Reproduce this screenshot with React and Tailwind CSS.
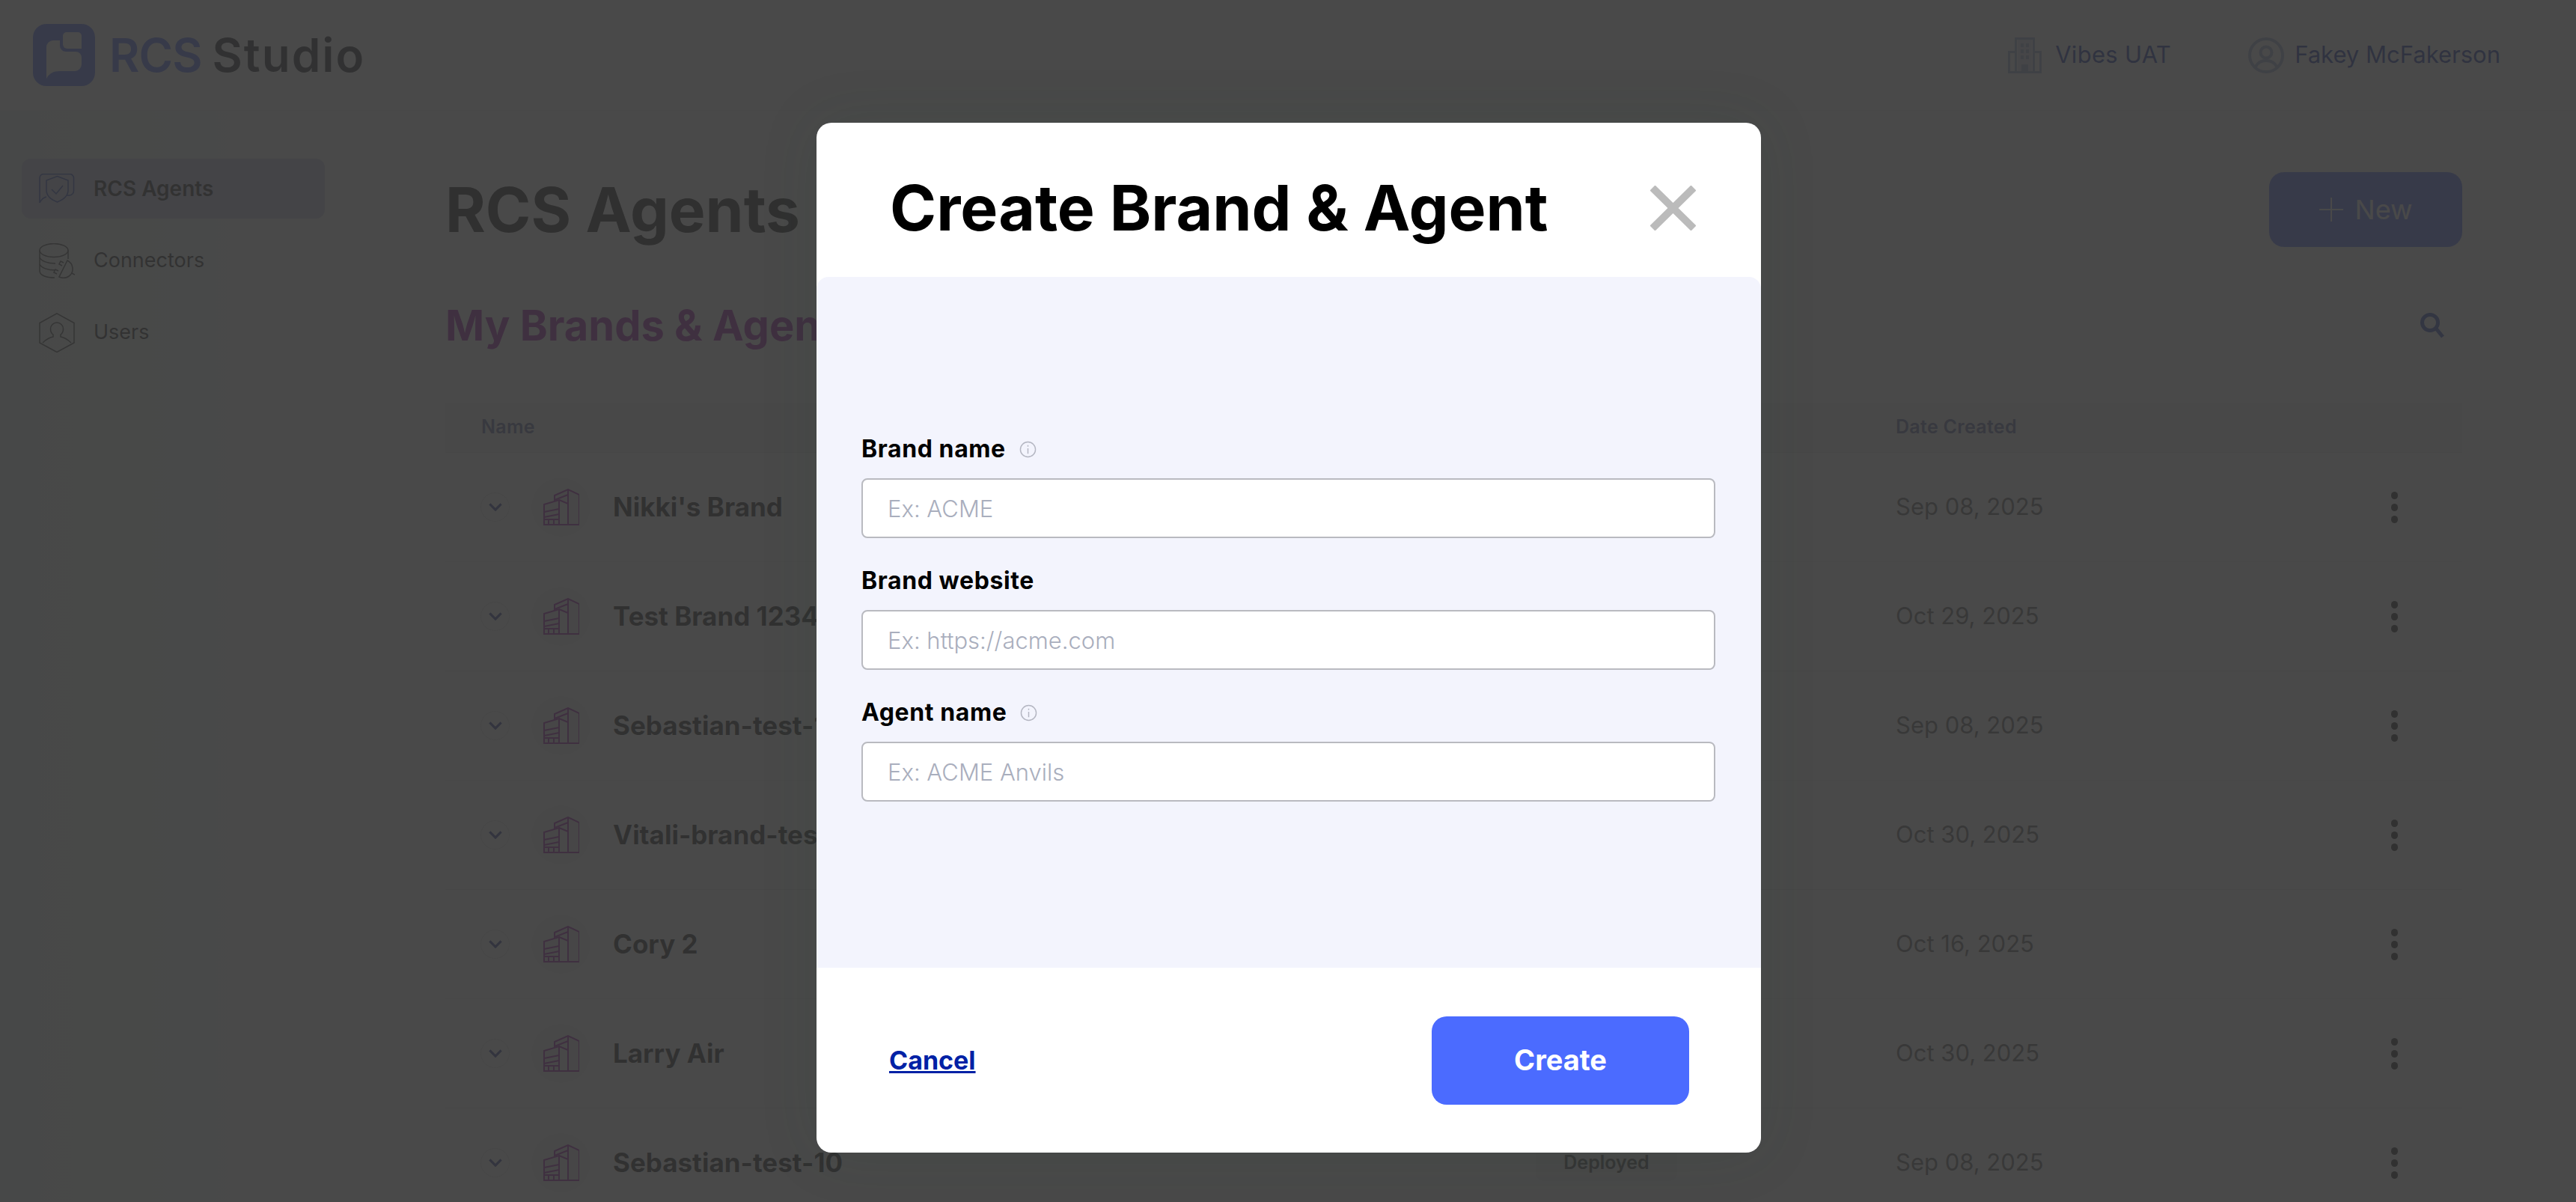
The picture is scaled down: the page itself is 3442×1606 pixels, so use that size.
import React from 'react';

const BRANDS = [
  { name: "Nikki's Brand", date: 'Sep 08, 2025' },
  { name: 'Test Brand 1234', date: 'Oct 29, 2025' },
  { name: 'Sebastian-test-1', date: 'Sep 08, 2025' },
  { name: 'Vitali-brand-test', date: 'Oct 30, 2025' },
  { name: 'Cory 2', date: 'Oct 16, 2025' },
  { name: 'Larry Air', date: 'Oct 30, 2025' },
  { name: 'Sebastian-test-10', date: 'Sep 08, 2025' },
];

function Logo() {
  return (
    <svg viewBox="0 0 83 83" className="w-[83px] h-[83px] shrink-0">
      <rect width="83" height="83" rx="18" fill="#4b6bff" />
      <path d="M45 11H60a5 5 0 0 1 5 5V33H46a6 6 0 0 1-6-6V16a5 5 0 0 1 5-5z" fill="#fff" />
      <path d="M18 73V31a9 9 0 0 1 9-9h9v7a8 8 0 0 0 8 8h13a8 8 0 0 1 8 8v9a9 9 0 0 1-9 9H36C27 63 22 66 18 73z" fill="#fff" />
    </svg>
  );
}

function ShieldChatIcon() {
  return (
    <svg viewBox="0 0 48 40" className="w-[48px] h-[40px]" fill="none" stroke="#1e3cb4" strokeWidth="1.5">
      <path d="M10 31C6 32 3 35 1 39V6a5.500 5.500 0 0 1 5-5.500H41a5.500 5.500 0 0 1 5.500 5.500V23a6 6 0 0 1-6 6H37" />
      <path d="M24.500 3.500L39 9V22C39 30 32 35 24.500 38C17 35 10 30 10 22V9z" />
      <path d="M17 21L23 27L32 16" />
    </svg>
  );
}

function DatabasePlugIcon() {
  return (
    <svg viewBox="0 0 48 47" className="w-[48px] h-[47px]" fill="none" stroke="#333" strokeWidth="1.5">
      <ellipse cx="20" cy="9.500" rx="19" ry="9" />
      <path d="M1 9.500V37C1 43 10 46 21 46" />
      <path d="M39 9.500V21" />
      <path d="M1 19C3 24 12 27 22 27" />
      <path d="M1 28C3 33 12 36 22 36" />
      <path d="M38 23L27 45C36 49 46 43 45 33C44.500 29 42 25 38 23z" />
      <path d="M33 26L29 24L27 28L31 30" />
      <path d="M26 37L22 35L20 39L24 41" />
      <path d="M44 40L48 42" />
    </svg>
  );
}

function UserHexIcon() {
  return (
    <svg viewBox="0 0 48 53" className="w-[48px] h-[53px]" fill="none" stroke="#333" strokeWidth="1.5">
      <path d="M24 .800L47 13.500V40L24 52.500L1 40V13.500z" />
      <path d="M5 40C9 36 14 33 19 32V29C16 27 15.500 24 15.500 21.500a8.500 8.500 0 0 1 17 0C32.500 24 32 27 29 29V32C34 33 39 36 43 40" />
    </svg>
  );
}

function BuildingOutlineIcon() {
  return (
    <svg viewBox="0 0 48 49" className="w-[48px] h-[49px]" fill="none" stroke="#96009f" strokeWidth="2">
      <path d="M21 15L33 20V48H48V8L33 1L15 9V17" fill="#96009f" fillOpacity="0.08" />
      <path d="M1 21L21 15V48H1z" fill="#96009f" fillOpacity="0.08" />
      <path d="M33 1V20M15 15L33 8M1 31L21 27M1 38L21 34M1 41H21M7 41V48M14 41V48M0 48H48" />
    </svg>
  );
}

function BuildingSolidIcon() {
  return (
    <svg viewBox="0 0 45 48" className="w-[45px] h-[48px]" fill="#98a8d8">
      <path d="M9 0H36V18H45V48H0V18H9zM12 3V45H18V36H27V45H33V3zM3 21V45H9V21zM36 21V45H42V21z" fillRule="evenodd" />
      <path d="M17 8h4v5h-4zM24 8h4v5h-4zM17 16h4v5h-4zM24 16h4v5h-4zM17 24h4v5h-4zM24 24h4v5h-4z" />
      <path d="M13 3h19v42h-19z" fillOpacity="0.35" />
    </svg>
  );
}

function ProfileIcon() {
  return (
    <svg viewBox="0 0 48 48" className="w-[48px] h-[48px]" fill="none" stroke="#98a8d8" strokeWidth="4">
      <circle cx="24" cy="24" r="22" />
      <circle cx="24" cy="20" r="7.500" />
      <path d="M10 39C13 33 18 31 24 31S35 33 38 39" />
    </svg>
  );
}

function NavItem({ icon, label, active }) {
  return (
    <div className={`flex items-center h-[80px] pl-[23px] rounded-[12px] ${active ? 'bg-[#c8c8e6]' : ''}`}>
      <div className="w-[48px] flex justify-center shrink-0">{icon}</div>
      <span className={`ml-[25px] text-[#1a1a1a] ${active ? 'text-[28px] font-semibold' : 'text-[27px] font-normal'}`}>{label}</span>
    </div>
  );
}

function BrandRow({ brand }) {
  return (
    <div className="grid grid-cols-[1457px_481px_1fr] items-center h-[146px] border-b border-[#e4e4e4]">
      <div className="flex items-center pl-[47px]">
        <div className="w-[39px] h-[39px] rounded-full border border-[#dddddd] flex items-center justify-center">
          <svg viewBox="0 0 20 12" className="w-[18px] h-[11px]" fill="none" stroke="#1e2f8c" strokeWidth="3.500">
            <path d="M1.500 1.500L10 10L18.500 1.500" />
          </svg>
        </div>
        <div className="ml-[29px] w-[79px] h-[79px] rounded-full bg-[#f3f3f3] flex items-center justify-center">
          <BuildingOutlineIcon />
        </div>
        <span className="ml-[30px] text-[35px] font-bold text-[#111111] whitespace-nowrap">{brand.name}</span>
      </div>
      <div>
        <span className="inline-flex items-center justify-center w-[189px] h-[48px] rounded-[10px] bg-[#efefef] text-[25px] font-semibold text-[#333333]">Deployed</span>
      </div>
      <div className="flex items-center justify-between pr-[86px]">
        <span className="text-[31px] text-[#555555]">{brand.date}</span>
        <div className="flex flex-col gap-[6px]">
          <span className="w-[9px] h-[10px] rounded-full bg-[#111111]" />
          <span className="w-[9px] h-[10px] rounded-full bg-[#111111]" />
          <span className="w-[9px] h-[10px] rounded-full bg-[#111111]" />
        </div>
      </div>
    </div>
  );
}

function InfoIcon() {
  return (
    <svg viewBox="0 0 24 24" className="w-[23px] h-[23px] ml-[18px]" fill="none" stroke="#b4b6c2" strokeWidth="1.500">
      <circle cx="12" cy="12" r="10.500" />
      <path d="M12 10.500V18M12 6V8" />
    </svg>
  );
}

function Field({ label, info, placeholder }) {
  return (
    <div>
      <div className="flex items-center h-[40px] mb-[19px]">
        <span className="text-[32px] font-bold tracking-[0.6px] text-black">{label}</span>
        {info && <InfoIcon />}
      </div>
      <input
        placeholder={placeholder}
        className="block w-full h-[80px] px-[33px] rounded-[8px] border-[2px] border-[#b9bac0] bg-white text-[31px] font-light placeholder:text-[#a9aebd] outline-none"
      />
    </div>
  );
}

export default function App() {
  return (
    <div className="relative w-full h-[1606px] overflow-hidden bg-white font-['Inter',sans-serif]">
      <header className="flex items-center justify-between h-[148px] pl-[44px] pr-[101px] border-b border-[#f0f0f0]">
        <div className="flex items-center">
          <Logo />
          <span className="ml-[19px] text-[62px] font-semibold">
            <span className="text-[#4b6bff] tracking-[-1px]">RCS</span>
            <span className="ml-[14px] text-[#0a0f14] tracking-[2px]">Studio</span>
          </span>
        </div>
        <div className="flex items-center">
          <BuildingSolidIcon />
          <span className="ml-[18px] text-[31px] tracking-[0.3px] text-[#0021a5]">Vibes UAT</span>
          <div className="ml-[103px]"><ProfileIcon /></div>
          <span className="ml-[14px] text-[31px] text-[#0021a5]">Fakey McFakerson</span>
        </div>
      </header>

      <div className="flex h-[1458px]">
        <aside className="w-[500px] shrink-0 bg-gradient-to-r from-[#eaf5f0] to-white pl-[29px] pt-[64px]">
          <div className="flex flex-col gap-[16px] w-[405px]">
            <NavItem active icon={<ShieldChatIcon />} label="RCS Agents" />
            <NavItem icon={<DatabasePlugIcon />} label="Connectors" />
            <NavItem icon={<UserHexIcon />} label="Users" />
          </div>
        </aside>

        <main className="flex-1 pl-[95px] pr-[152px] pt-[82px]">
          <div className="flex items-center justify-between h-[100px]">
            <h1 className="text-[82px] font-bold text-black leading-none pt-[2px]">RCS Agents</h1>
            <button className="flex items-center justify-center gap-[16px] w-[258px] h-[100px] rounded-[20px] bg-[#4b6bff] text-white text-[36px]">
              <svg viewBox="0 0 32 32" className="w-[32px] h-[32px]" fill="none" stroke="#fff" strokeWidth="2">
                <path d="M16 0V32M0 16H32" />
              </svg>
              New
            </button>
          </div>

          <div className="flex items-center justify-between h-[70px] mt-[70px] pr-[24px]">
            <h2 className="text-[56px] font-bold text-[#96009f] whitespace-nowrap">My Brands &amp; Agents</h2>
            <svg viewBox="0 0 32 34" className="w-[32px] h-[34px]" fill="none" stroke="#1e3cb4" strokeWidth="5">
              <circle cx="13" cy="13" r="10.500" />
              <path d="M21 21L30 32" />
            </svg>
          </div>

          <div className="mt-[68px]">
            <div className="grid grid-cols-[1890px_1fr] items-center h-[67px] pl-[48px] border-b border-[#e4e4e4] bg-[#f5f5f5] text-[25px] font-semibold tracking-[0.3px] text-[#505a9a]">
              <span>Name</span>
              <span>Date Created</span>
            </div>
            {BRANDS.map((brand) => (
              <BrandRow key={brand.name} brand={brand} />
            ))}
          </div>
        </main>
      </div>

      <div className="absolute inset-0 bg-[#353535]/90 flex justify-center items-start pt-[164px] pl-[2px]">
        <div className="flex flex-col w-[1262px] h-[1376px] rounded-[20px] bg-white shadow-[0_0_80px_rgba(40,70,60,0.12)] overflow-hidden">
          <div className="flex items-center justify-between h-[206px] shrink-0 pt-[22px] pl-[98px] pr-[87px]">
            <h2 className="text-[84px] font-bold text-black leading-none whitespace-nowrap">Create Brand &amp; Agent</h2>
            <svg viewBox="0 0 61 60" className="w-[61px] h-[60px]" fill="none" stroke="#bbbbbb" strokeWidth="10">
              <path d="M3 3L58 57M58 3L3 57" />
            </svg>
          </div>

          <div className="flex-1 flex flex-col justify-center gap-[37px] rounded-t-[16px] bg-[#f3f4fd] pl-[60px] pr-[61px] pb-[12px]">
            <Field label="Brand name" info placeholder="Ex: ACME" />
            <Field label="Brand website" placeholder="Ex: https://acme.com" />
            <Field label="Agent name" info placeholder="Ex: ACME Anvils" />
          </div>

          <div className="flex items-center justify-between h-[247px] shrink-0 pl-[97px] pr-[96px]">
            <a className="text-[34px] font-bold text-[#0021a5] underline">Cancel</a>
            <button className="w-[344px] h-[118px] rounded-[20px] bg-[#4b6bff] text-white text-[38px] font-bold">Create</button>
          </div>
        </div>
      </div>
    </div>
  );
}
